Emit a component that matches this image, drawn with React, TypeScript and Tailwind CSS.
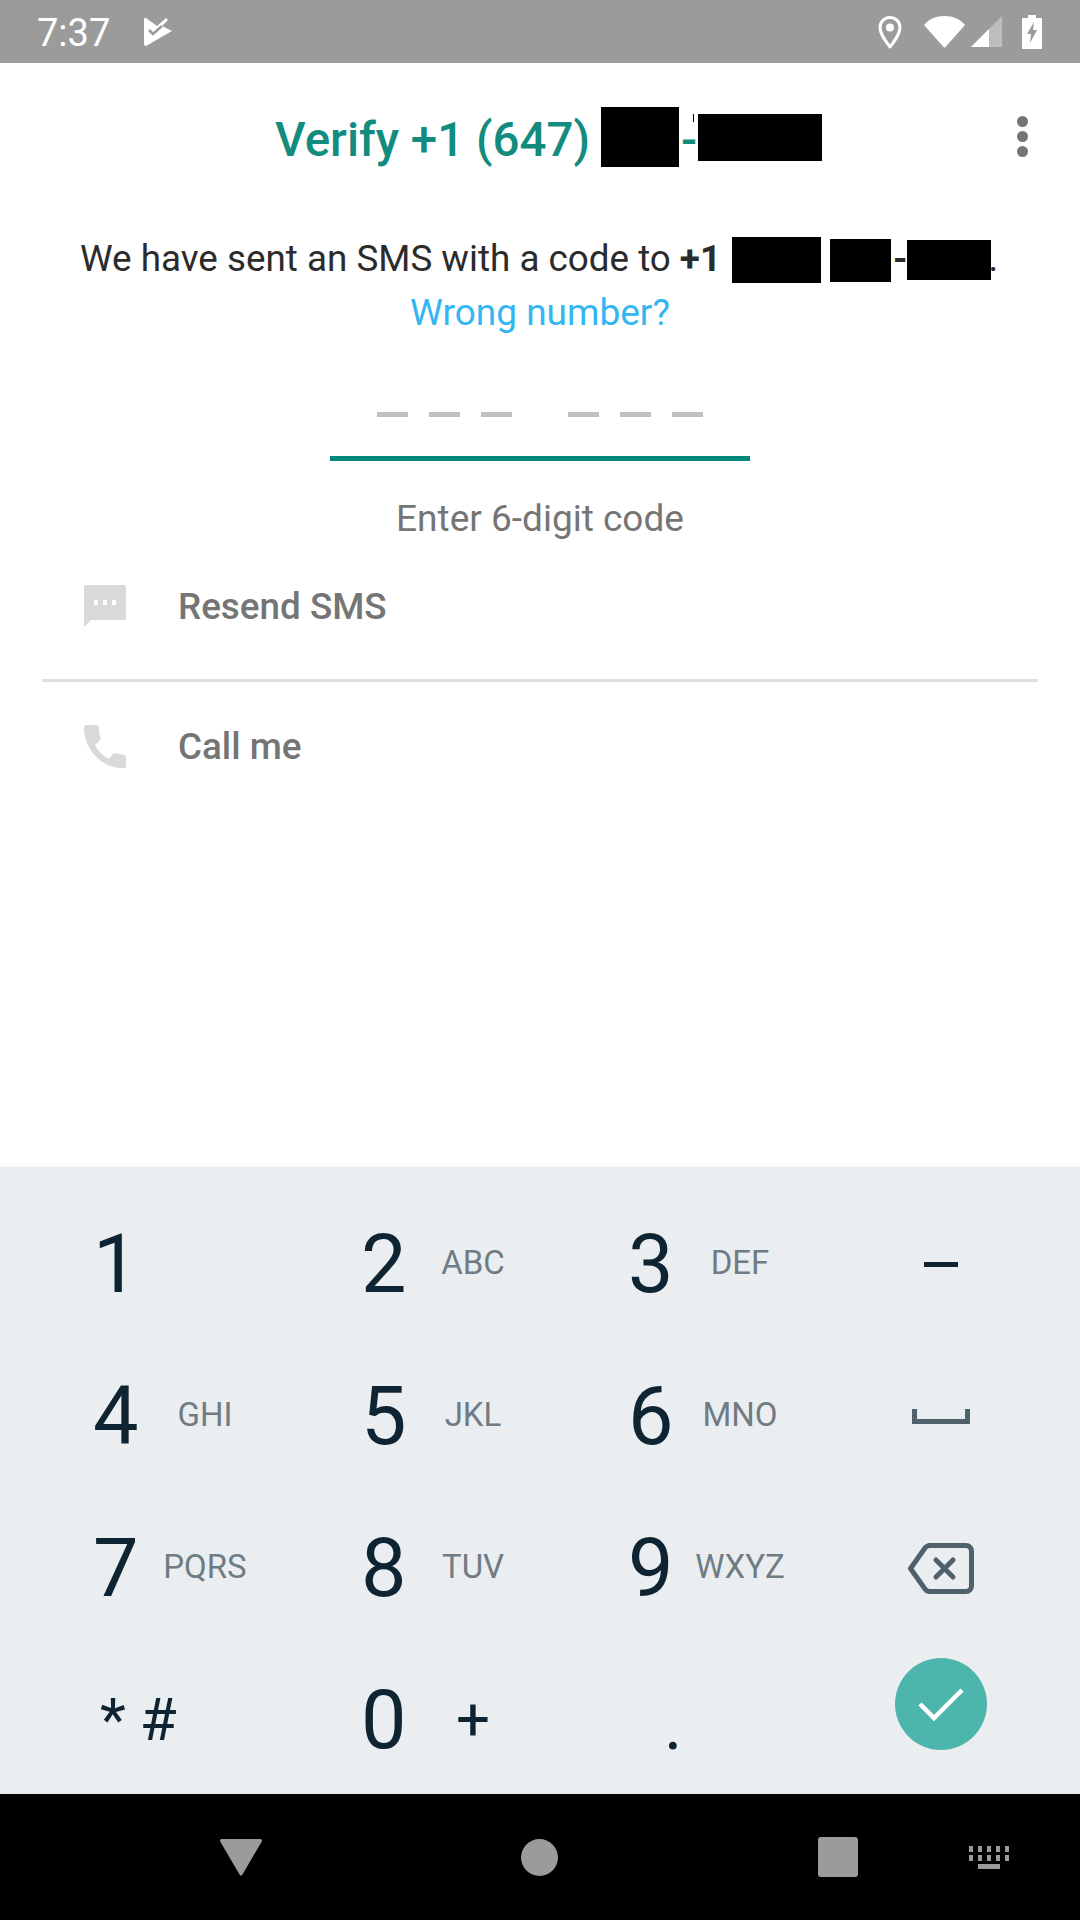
const rows = [
  [
    { n: "1", l: "" },
    { n: "2", l: "ABC" },
    { n: "3", l: "DEF" },
  ],
  [
    { n: "4", l: "GHI" },
    { n: "5", l: "JKL" },
    { n: "6", l: "MNO" },
  ],
  [
    { n: "7", l: "PQRS" },
    { n: "8", l: "TUV" },
    { n: "9", l: "WXYZ" },
  ],
];

const Key = ({ n, l }: { n: string; l: string }) => (
  <div className="flex items-center h-[152px]">
    <span className="w-[56px] text-[81px] leading-none text-[#0f2433]">{n}</span>
    <span className="w-[112px] mb-[2px] text-center text-[33px] text-[#6f7c84]">{l}</span>
  </div>
);

const StatusBar = () => (
  <div className="flex items-center h-[63px] bg-[#9b9b9b] text-white">
    <span className="mt-[2px] ml-[37px] text-[38px] leading-none">7:37</span>
    <svg className="ml-[34px]" width="28" height="29" viewBox="0 0 28 29" fill="#fff">
      <path d="M0 2Q0 0 2 1L13 9L22 1L24 3L18 9L28 14L2 29Q0 29 0 27Z" />
      <path d="M5 13l4 4 9-8" fill="none" stroke="#9b9b9b" strokeWidth="2.500" />
    </svg>
    <svg className="ml-auto" width="24" height="34" viewBox="0 0 24 34" fill="none">
      <path d="M12 32C7 25 2 19 2 12.500a10 10 0 0 1 20 0C22 19 17 25 12 32z" stroke="#fff" strokeWidth="3" strokeLinejoin="round" />
      <circle cx="12" cy="12.500" r="4" fill="#fff" />
    </svg>
    <svg className="ml-[22px]" width="41" height="32" viewBox="0 0 41 32" fill="#fff">
      <path d="M0 9C5 3 12 0 20.500 0S36 3 41 9L21.500 31a1.400 1.400 0 0 1-2 0z" />
    </svg>
    <svg className="ml-[6px]" width="31" height="31" viewBox="0 0 31 31">
      <path d="M0 31 31 0v31z" fill="#bdbdbd" />
      <path d="M0 31 18 13v18z" fill="#fff" />
    </svg>
    <svg className="ml-[20px] mr-[38px]" width="20" height="34" viewBox="0 0 20 34">
      <path d="M6 0h8v3h6v31H0V3h6z" fill="#fff" />
      <path d="M12 7 5 19h4l-1 9 7-13h-4z" fill="#9b9b9b" />
    </svg>
  </div>
);

const Content = () => (
  <div className="flex-1 bg-white">
    <div className="relative flex items-center h-[104px] mt-[22px] pl-[275px]">
      <span className="mt-[7px] text-[47.500px] font-medium text-[#128c7e] leading-none">Verify +1 (647)</span>
      <span className="ml-[11px] w-[78px] h-[60px] bg-black" />
      <span className="ml-[2px] mt-[7px] text-[47.500px] font-medium text-[#128c7e] leading-none">-</span>
      <span className="ml-px w-[124px] h-[47px] bg-black" />
      <span className="absolute left-[693px] top-[29px] w-px h-[8px] bg-black" />
      <svg className="absolute left-[1017px] top-[31px]" width="11" height="41" viewBox="0 0 11 41" fill="#757575">
        <circle cx="5.500" cy="5.500" r="5.500" />
        <circle cx="5.500" cy="20.500" r="5.500" />
        <circle cx="5.500" cy="35.500" r="5.500" />
      </svg>
    </div>

    <div className="flex items-center h-[46px] mt-[48px] pl-[80px] text-[36.800px] leading-none text-[#2b2b2b]">
      <span className="mb-[2px]">We have sent an SMS with a code to</span>
      <span className="ml-[9px] mb-[2px] font-bold">+1</span>
      <span className="ml-[11px] w-[89px] h-[46px] bg-black" />
      <span className="ml-[9px] w-[61px] h-[43px] bg-black" />
      <span className="ml-[2px] mb-[2px] font-bold">-</span>
      <span className="-ml-px w-[84px] h-[40px] bg-black" />
      <span className="-ml-[2px] mb-[2px]">.</span>
    </div>
    <p className="mt-[3px] text-center text-[37px] leading-[54px] text-[#34b7f1]">Wrong number?</p>

    <div className="flex justify-center mt-[72px]">
      <div className="flex gap-[21px]">
        <span className="w-[31px] h-[5px] bg-[#bdc1c4]" />
        <span className="w-[31px] h-[5px] bg-[#bdc1c4]" />
        <span className="w-[31px] h-[5px] bg-[#bdc1c4]" />
      </div>
      <div className="flex gap-[21px] ml-[56px]">
        <span className="w-[31px] h-[5px] bg-[#bdc1c4]" />
        <span className="w-[31px] h-[5px] bg-[#bdc1c4]" />
        <span className="w-[31px] h-[5px] bg-[#bdc1c4]" />
      </div>
    </div>
    <div className="w-[420px] h-[5px] mx-auto mt-[39px] bg-[#00897b]" />
    <p className="mt-[36px] text-center text-[37px] leading-[44px] text-[#757575]">Enter 6-digit code</p>

    <div className="flex items-center h-[44px] mt-[43px] pl-[84px]">
      <svg width="42" height="42" viewBox="0 0 42 42" fill="#d9d9d9">
        <path d="M2 0h38a2 2 0 0 1 2 2v31a2 2 0 0 1-2 2H7l-7 7V2a2 2 0 0 1 2-2z" />
        <rect x="10" y="15" width="4" height="5" fill="#fff" />
        <rect x="19" y="15" width="4" height="5" fill="#fff" />
        <rect x="28" y="15" width="4" height="5" fill="#fff" />
      </svg>
      <span className="ml-[52px] mt-[2px] text-[36.800px] font-medium leading-none text-[#757575]">Resend SMS</span>
    </div>
    <div className="h-[3px] mx-[42px] mt-[51px] bg-[#e0e0e0]" />
    <div className="flex items-center h-[44px] mt-[42px] pl-[84px]">
      <svg width="42" height="43" viewBox="0 0 42 43" fill="#d9d9d9">
        <path d="M3 0h9c2 0 3 1 3 3 0 4 .5 7 1.500 9 .5 1.500.3 2.500-.7 3.500L11 20c4 7 8 11 14 14l4-5c1-1 2-1.300 3.500-.8 2 .8 4.500 1.300 6.500 1.300 2 0 3 1 3 3v8c0 2-1 3-3 3C18 43 0 25 0 3c0-2 1-3 3-3z" />
      </svg>
      <span className="ml-[52px] mt-[2px] text-[36.800px] font-medium leading-none text-[#757575]">Call me</span>
    </div>
  </div>
);

const Keypad = () => (
  <div className="h-[627px] pt-[21px] pl-[93px] bg-[#ebeef1] shadow-[0_-2px_4px_rgba(0,0,0,0.04)]">
    <div className="grid grid-cols-[268px_267px_268px_90px]">
      {rows.map((row, i) => (
        <div key={i} className="contents">
          {row.map((k) => (
            <Key key={k.n} n={k.n} l={k.l} />
          ))}
          <div className="flex items-center justify-center h-[152px]">
            {i === 0 && <span className="w-[34px] h-[5px] bg-[#0f2433]" />}
            {i === 1 && (
              <svg width="58" height="15" viewBox="0 0 58 15" fill="#4f626b">
                <path d="M0 0h5v10h48V0h5v15H0z" />
              </svg>
            )}
            {i === 2 && (
              <svg width="66" height="51" viewBox="0 0 66 51" fill="none" stroke="#4f626b" strokeWidth="5">
                <path d="M2.500 25.500 17 5a6 6 0 0 1 4-2.500h37a5.500 5.500 0 0 1 5.500 5.500v35a5.500 5.500 0 0 1-5.500 5.500H21a6 6 0 0 1-4-2.500z" strokeLinejoin="round" />
                <path d="M28 17l17 17M45 17 28 34" strokeLinecap="round" />
              </svg>
            )}
          </div>
        </div>
      ))}
      <div className="flex items-center h-[152px] pl-[7px] text-[60px] leading-none text-[#0f2433]">
        <span>*</span>
        <span className="ml-[14px]">#</span>
      </div>
      <div className="flex items-center h-[152px]">
        <span className="w-[56px] text-[81px] leading-none text-[#0f2433]">0</span>
        <span className="w-[112px] text-center text-[60px] leading-none text-[#0f2433]">+</span>
      </div>
      <div className="flex h-[152px] pl-[36px] pt-[46px]">
        <span className="text-[70px] leading-none text-[#0f2433]">.</span>
      </div>
      <div className="flex justify-center h-[152px] pt-[14px]">
        <div className="flex shrink-0 items-center justify-center w-[92px] h-[92px] rounded-full bg-[#4db6ac]">
          <svg width="46" height="35" viewBox="0 0 46 35" fill="none" stroke="#fff" strokeWidth="4.500">
            <path d="M2 17l14 14L44 3" />
          </svg>
        </div>
      </div>
    </div>
  </div>
);

const NavBar = () => (
  <div className="flex items-center h-[126px] bg-black">
    <svg className="ml-[220px]" width="42" height="37" viewBox="0 0 42 37" fill="#9b9b9b">
      <path d="M2 0h38c1.500 0 2.300 1 1.800 2.400L22.500 35.500c-.7 1.500-2.300 1.500-3 0L.2 2.400C-.3 1 .5 0 2 0z" />
    </svg>
    <span className="ml-[259px] w-[37px] h-[37px] rounded-full bg-[#9b9b9b]" />
    <span className="ml-[260px] w-[40px] h-[40px] rounded-[3px] bg-[#9b9b9b]" />
    <svg className="ml-[111px]" width="40" height="23" viewBox="0 0 40 23" fill="#9b9b9b">
      <path d="M0 0h4v6H0zM9 0h4v6H9zM18 0h4v6h-4zM27 0h4v6h-4zM36 0h4v6h-4zM0 9h4v6H0zM9 9h4v6H9zM18 9h4v6h-4zM27 9h4v6h-4zM36 9h4v6h-4zM9 18h22v5H9z" />
    </svg>
  </div>
);

export default function App() {
  return (
    <div className="flex flex-col w-[1080px] h-[1920px] font-['Roboto',sans-serif]">
      <StatusBar />
      <Content />
      <Keypad />
      <NavBar />
    </div>
  );
}
